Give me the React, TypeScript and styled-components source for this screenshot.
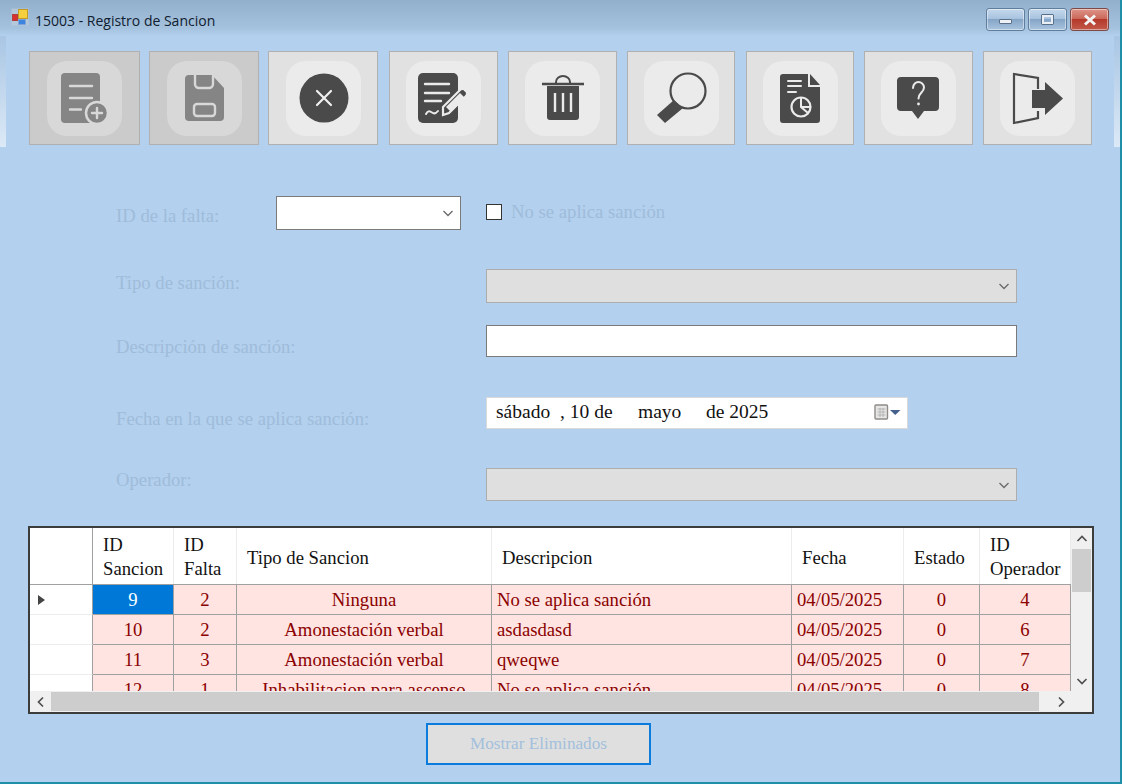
import React from 'react';
import styled, { createGlobalStyle } from 'styled-components';

const GlobalStyle = createGlobalStyle`
  html, body {
    margin: 0;
    padding: 0;
    background: #b3d0ee;
  }
`;

const COLUMNS = '63px 81px 63px 255px 300px 112px 76px 91px';
const SERIF = '"Liberation Serif", "Times New Roman", serif';
const TEXT_SIZE = '18.7px';

const Window = styled.div`
  position: relative;
  width: 1122px;
  height: 784px;
  box-sizing: border-box;
  overflow: hidden;
  border-bottom: 2px solid #1f8fa8;
  border-right: 2px solid #1f8fa8;
  background: linear-gradient(to bottom, #92afcc 0, #a4c1de 28px, #b3d0ee 36px);
  font-family: ${SERIF};

  &::before,
  &::after {
    content: '';
    position: absolute;
    top: 36px;
    width: 6px;
    height: 111px;
    background: linear-gradient(to bottom, #a9c6e4, #dce9f6);
  }

  &::before {
    left: 0;
  }

  &::after {
    right: 0;
  }
`;

const TitleBar = styled.div`
  height: 40px;
  box-sizing: border-box;
  padding: 8px 11px 0 11px;
  display: flex;
  align-items: flex-start;
`;

const TitleText = styled.span`
  margin: 3px 0 0 6px;
  font: 14px/20px "Open Sans", sans-serif;
  color: #10202e;
`;

const CaptionButtons = styled.div`
  margin-left: auto;
  display: flex;
  gap: 3px;
`;

const CaptionButton = styled.div<{ $close?: boolean }>`
  width: 39px;
  height: 23px;
  box-sizing: border-box;
  border: 1px solid ${p => (p.$close ? '#7d4a48' : '#5f7e9e')};
  border-radius: 3px;
  display: flex;
  align-items: center;
  justify-content: center;
  background: ${p =>
    p.$close
      ? 'linear-gradient(to bottom, #dd9488 0, #cc6a5c 45%, #b5392b 50%, #c25a4a 100%)'
      : 'linear-gradient(to bottom, #c5d8ec 0, #a9c4e0 45%, #86a5c6 50%, #a8c4e0 100%)'};
  box-shadow: inset 0 0 0 1px rgba(255, 255, 255, 0.45);
`;

const MinGlyph = styled.div`
  width: 13px;
  height: 5px;
  margin-top: 4px;
  box-sizing: border-box;
  border: 1px solid #5a7088;
  border-radius: 1px;
  background: #eef2f6;
`;

const MaxGlyph = styled.div`
  width: 13px;
  height: 11px;
  box-sizing: border-box;
  border: 3px solid #e8eef4;
  outline: 1px solid #58708a;
  outline-offset: -1px;
  border-radius: 1px;
`;

const Toolbar = styled.div`
  margin-top: 11px;
  padding-left: 29px;
  display: flex;
`;

const ToolButton = styled.div<{ $off?: boolean; $gap: number; $width: number }>`
  width: ${p => p.$width}px;
  height: 94px;
  margin-left: ${p => p.$gap}px;
  box-sizing: border-box;
  border: 1.5px solid #b0b0b0;
  display: flex;
  align-items: center;
  justify-content: center;
  background: ${p => (p.$off ? '#cbcbcb' : '#e1e1e1')};
  color: ${p => (p.$off ? '#858585' : '#4a4a4a')};
  --cut: ${p => (p.$off ? '#d8d8d8' : '#ebebeb')};
`;

const Tile = styled.div`
  width: 75px;
  height: 75px;
  border-radius: 20px;
  background: var(--cut);

  svg {
    display: block;
  }
`;

const Form = styled.div`
  padding-left: 116px;
  display: flex;
  flex-direction: column;
`;

const FieldRow = styled.div<{ $top: number }>`
  margin-top: ${p => p.$top}px;
  display: flex;
  align-items: flex-start;
`;

const FieldLabel = styled.label<{ $width?: number; $offset: number }>`
  width: ${p => p.$width ?? 370}px;
  flex: none;
  padding-top: ${p => p.$offset}px;
  font-size: ${TEXT_SIZE};
  line-height: 20px;
  color: #9fbcda;
`;

const ComboBox = styled.div<{ $width: number; $height: number; $off?: boolean }>`
  width: ${p => p.$width}px;
  height: ${p => p.$height}px;
  box-sizing: border-box;
  padding-right: 6px;
  display: flex;
  align-items: center;
  justify-content: flex-end;
  border: 1px solid ${p => (p.$off ? '#adadad' : '#7a7a7a')};
  background: ${p => (p.$off ? '#dfdfdf' : '#ffffff')};
  color: #6a6a6a;
`;

const TextInput = styled.div`
  width: 531px;
  height: 32px;
  box-sizing: border-box;
  border: 1px solid #7a7a7a;
  background: #ffffff;
`;

const CheckField = styled.div`
  margin-left: 25px;
  padding-top: 6px;
  display: flex;
  align-items: center;
  gap: 9px;
  font-size: ${TEXT_SIZE};
  line-height: 20px;
  color: #9fbcda;
`;

const CheckBox = styled.div`
  width: 16px;
  height: 16px;
  box-sizing: border-box;
  border: 1px solid #333333;
  background: #ffffff;
`;

const DateBox = styled.div`
  width: 422px;
  height: 32px;
  box-sizing: border-box;
  padding: 0 6px 2px 9px;
  display: flex;
  align-items: center;
  border: 1px solid #d9d9d9;
  background: #ffffff;
  font-size: 19.5px;
  color: #111111;
`;

const DatePart = styled.span<{ $width: number }>`
  width: ${p => p.$width}px;
  flex: none;
`;

const CalendarButton = styled.div`
  margin-left: auto;
  display: flex;
  align-items: center;
`;

const DataGrid = styled.div`
  margin: 25px 0 0 28px;
  width: 1066px;
  height: 188px;
  box-sizing: border-box;
  border: 2px solid #3c3c3c;
  display: grid;
  grid-template-columns: 1041px 21px;
  grid-template-rows: 163px 21px;
  background: #ffffff;
`;

const GridBody = styled.div`
  overflow: hidden;
`;

const HeadRow = styled.div`
  height: 57px;
  display: grid;
  grid-template-columns: ${COLUMNS};
  border-bottom: 1px solid #a0a0a0;
  box-sizing: border-box;
`;

const HeadCell = styled.div<{ $first?: boolean; $pull?: boolean }>`
  padding: ${p => (p.$pull ? '2px' : '4px')} 0 0 10px;
  display: flex;
  align-items: center;
  box-sizing: border-box;
  border-right: 1px solid ${p => (p.$first ? '#a0a0a0' : '#ececec')};
  font-size: ${TEXT_SIZE};
  line-height: 24px;
  color: #111111;
`;

const DataRow = styled.div`
  height: 30px;
  display: grid;
  grid-template-columns: ${COLUMNS};
`;

const RowHeader = styled.div`
  padding-left: 8px;
  display: flex;
  align-items: center;
  box-sizing: border-box;
  border-right: 1px solid #a0a0a0;
  border-bottom: 1px solid #ececec;
  background: #ffffff;
`;

const Cell = styled.div<{ $left?: boolean; $selected?: boolean }>`
  box-sizing: border-box;
  padding-left: ${p => (p.$left ? 5 : 0)}px;
  text-align: ${p => (p.$left ? 'left' : 'center')};
  border-right: 1px solid #a0a0a0;
  border-bottom: 1px solid #a0a0a0;
  background: ${p => (p.$selected ? '#0078d7' : '#ffe4e1')};
  color: ${p => (p.$selected ? '#ffffff' : '#8b0000')};
  font-size: ${TEXT_SIZE};
  line-height: 29px;
  white-space: nowrap;
  overflow: hidden;
`;

const VScroll = styled.div`
  display: flex;
  flex-direction: column;
  background: #f0f0f0;
`;

const HScroll = styled.div`
  display: flex;
  background: #f0f0f0;
`;

const ScrollArrow = styled.div`
  width: 21px;
  height: 21px;
  flex: none;
  display: flex;
  align-items: center;
  justify-content: center;
  color: #505050;
`;

const VThumb = styled.div`
  height: 43px;
  margin: 0 1px;
  background: #cdcdcd;
`;

const HThumb = styled.div`
  width: 988px;
  margin: 1px 0;
  background: #cdcdcd;
`;

const Spring = styled.div`
  flex: 1;
`;

const Corner = styled.div`
  background: #f0f0f0;
`;

const Footer = styled.div`
  margin-top: 9px;
  padding-left: 426px;
`;

const PlainButton = styled.div`
  width: 225px;
  height: 42px;
  box-sizing: border-box;
  border: 2px solid #0b7bdc;
  display: flex;
  align-items: center;
  justify-content: center;
  background: #dfdfdf;
  font-size: 17.2px;
  color: #a3bfdc;
`;

function Chevron({ points }: { points: string }) {
  return (
    <svg width="12" height="12" viewBox="0 0 12 12" fill="none" stroke="currentColor" strokeWidth="1.7">
      <polyline points={points} />
    </svg>
  );
}

const Down = () => <Chevron points="1.5,4 6,8.5 10.5,4" />;

const ComboArrow = () => (
  <svg width="12" height="12" viewBox="0 0 12 12" fill="none" stroke="currentColor" strokeWidth="1.3">
    <polyline points="1.5,4 6,8.5 10.5,4" />
  </svg>
);

function AppIcon() {
  return (
    <svg width="18" height="18" viewBox="0 0 18 18">
      <rect x="0.5" y="0.5" width="17" height="17" fill="#c5d0dc" opacity="0.6" />
      <rect x="7.5" y="1.500" width="9" height="9" fill="#f6cf3c" stroke="#c29a28" />
      <rect x="1.500" y="6.500" width="5" height="6" fill="#d8302a" stroke="#b04040" />
      <rect x="7.500" y="11.500" width="7" height="5" fill="#3d84e0" stroke="#7fa5d8" />
    </svg>
  );
}

function CalendarIcon() {
  return (
    <svg width="27" height="18" viewBox="0 0 27 18">
      <rect x="1" y="2" width="12.500" height="14" rx="1" fill="#e6e6e6" stroke="#8f8a88" strokeWidth="1.400" />
      <path d="M3.500 6h8M3.500 9h8M3.500 12h8M6 5v9M9 5v9" stroke="#b4b4b4" strokeWidth="1" />
      <path d="M16 7h10.500l-5.250 5z" fill="#44608c" />
    </svg>
  );
}

const Svg = ({ children }: { children: React.ReactNode }) => (
  <svg width="75" height="75" viewBox="0 0 75 75" fill="currentColor" stroke="none">
    {children}
  </svg>
);

const cut = { stroke: 'var(--cut)', fill: 'none', strokeLinecap: 'round' as const };

function NewIcon() {
  return (
    <Svg>
      <rect x="14" y="12" width="39" height="50" rx="4" />
      <path d="M23 25h22M23 37h22M23 48.5h11" {...cut} strokeWidth="2.4" />
      <circle cx="50" cy="52" r="11" stroke="var(--cut)" strokeWidth="2.5" />
      <path d="M45 52h10M50 47v10" {...cut} strokeWidth="2.4" />
    </Svg>
  );
}

function SaveIcon() {
  return (
    <Svg>
      <path d="M22 14h23l12 13v29a4 4 0 0 1-4 4H22a4 4 0 0 1-4-4V18a4 4 0 0 1 4-4z" />
      <path d="M28 13v10a4 4 0 0 0 4 4h10a4 4 0 0 0 4-4V13" {...cut} strokeWidth="2.4" />
      <rect x="27" y="43" width="21" height="12" rx="3" {...cut} strokeWidth="2.4" />
    </Svg>
  );
}

function CancelIcon() {
  return (
    <Svg>
      <circle cx="38" cy="37" r="24.5" />
      <path d="M31 30l14 14M45 30l-14 14" stroke="#f0f0f0" strokeWidth="2.2" strokeLinecap="round" />
    </Svg>
  );
}

function EditIcon() {
  return (
    <Svg>
      <rect x="12" y="12" width="40" height="50" rx="5" />
      <path d="M19 23h24M19 32h24M19 40h16" {...cut} strokeWidth="2.4" />
      <path d="M20 53c2-4 4-3 6-1.500s4 1 6-1.500" {...cut} strokeWidth="2" />
      <path d="M37 46l17-17a3 3 0 0 1 4.500 0l1.500 1.500a3 3 0 0 1 0 4.500L43 52l-6 2z" stroke="var(--cut)" strokeWidth="2.2" />
      <path d="M40 46l14-14 5 5-14 14z" fill="var(--cut)" />
      <path d="M55 31l2-2 3 3-2 2z" />
    </Svg>
  );
}

function TrashIcon() {
  return (
    <Svg>
      <path d="M17 23h42" stroke="currentColor" strokeWidth="2.4" />
      <path d="M31 23v-2a7 6 0 0 1 14 0v2" fill="none" stroke="currentColor" strokeWidth="2" />
      <path d="M22 25h32v31a3 3 0 0 1-3 3H25a3 3 0 0 1-3-3z" />
      <path d="M30 32v19M38 32v19M46 32v19" stroke="var(--cut)" strokeWidth="2.4" />
    </Svg>
  );
}

function SearchIcon() {
  return (
    <Svg>
      <circle cx="44" cy="30" r="17.500" fill="none" stroke="currentColor" strokeWidth="2.2" />
      <path d="M13 54l17-15 9 8-18 15z" />
    </Svg>
  );
}

function ReportIcon() {
  return (
    <Svg>
      <path d="M20 13h25v13h12v33a3 3 0 0 1-3 3H20a3 3 0 0 1-3-3V16a3 3 0 0 1 3-3z" />
      <path d="M47 13l10 11H47z" />
      <path d="M25 20h13M25 25h13M25 31h8" {...cut} strokeWidth="2" />
      <circle cx="38" cy="46" r="9.500" {...cut} strokeWidth="2.2" />
      <path d="M38 37v9l7 6M38 46h9" {...cut} strokeWidth="2" />
    </Svg>
  );
}

function HelpIcon() {
  return (
    <Svg>
      <path d="M20 16h34a4 4 0 0 1 4 4v26a4 4 0 0 1-4 4H43l-6 8-6-8H20a4 4 0 0 1-4-4V20a4 4 0 0 1 4-4z" />
      <path d="M32 27c0-4 3-6 5.500-6s5.500 2 5.500 5.500c0 5-5.500 5-5.500 11" {...cut} strokeWidth="2" />
      <circle cx="37.500" cy="43" r="1.400" fill="var(--cut)" />
    </Svg>
  );
}

function ExitIcon() {
  return (
    <Svg>
      <path d="M38 28V17l-24-4v49l24-5V50" fill="none" stroke="currentColor" strokeWidth="2.2" />
      <path d="M32 29h13v-8l18 16.500L45 54v-7H32z" />
    </Svg>
  );
}

const tools = [
  { Icon: NewIcon, off: true, gap: 0, width: 111 },
  { Icon: SaveIcon, off: true, gap: 9, width: 110 },
  { Icon: CancelIcon, off: false, gap: 9, width: 110 },
  { Icon: EditIcon, off: false, gap: 11, width: 109 },
  { Icon: TrashIcon, off: false, gap: 10, width: 109 },
  { Icon: SearchIcon, off: false, gap: 10, width: 108 },
  { Icon: ReportIcon, off: false, gap: 11, width: 108 },
  { Icon: HelpIcon, off: false, gap: 10, width: 109 },
  { Icon: ExitIcon, off: false, gap: 10, width: 109 },
];

const headers: { text: React.ReactNode; pull?: boolean }[] = [
  { text: '' },
  { text: <>ID<br />Sancion</>, pull: true },
  { text: <>ID<br />Falta</>, pull: true },
  { text: 'Tipo de Sancion' },
  { text: 'Descripcion' },
  { text: 'Fecha' },
  { text: 'Estado' },
  { text: <>ID<br />Operador</>, pull: true },
];

const rows = [
  ['9', '2', 'Ninguna', 'No se aplica sanción', '04/05/2025', '0', '4'],
  ['10', '2', 'Amonestación verbal', 'asdasdasd', '04/05/2025', '0', '6'],
  ['11', '3', 'Amonestación verbal', 'qweqwe', '04/05/2025', '0', '7'],
  ['12', '1', 'Inhabilitacion para ascenso', 'No se aplica sanción', '04/05/2025', '0', '8'],
];

function App() {
  return (
    <Window>
      <GlobalStyle />
      <TitleBar>
        <AppIcon />
        <TitleText>15003 - Registro de Sancion</TitleText>
        <CaptionButtons>
          <CaptionButton><MinGlyph /></CaptionButton>
          <CaptionButton><MaxGlyph /></CaptionButton>
          <CaptionButton $close>
            <svg width="16" height="12" viewBox="0 0 16 12">
              <path d="M3 1.500l10 9M13 1.500l-10 9" stroke="#f4f4f4" strokeWidth="3" />
            </svg>
          </CaptionButton>
        </CaptionButtons>
      </TitleBar>

      <Toolbar>
        {tools.map(({ Icon, off, gap, width }, i) => (
          <ToolButton key={i} $off={off} $gap={gap} $width={width}>
            <Tile><Icon /></Tile>
          </ToolButton>
        ))}
      </Toolbar>

      <Form>
        <FieldRow $top={51}>
          <FieldLabel $width={160} $offset={10}>ID de la falta:</FieldLabel>
          <ComboBox $width={185} $height={34}><ComboArrow /></ComboBox>
          <CheckField>
            <CheckBox />
            No se aplica sanción
          </CheckField>
        </FieldRow>
        <FieldRow $top={39}>
          <FieldLabel $offset={4}>Tipo de sanción:</FieldLabel>
          <ComboBox $width={531} $height={34} $off><ComboArrow /></ComboBox>
        </FieldRow>
        <FieldRow $top={22}>
          <FieldLabel $offset={12}>Descripción de sanción:</FieldLabel>
          <TextInput />
        </FieldRow>
        <FieldRow $top={40}>
          <FieldLabel $offset={12}>Fecha en la que se aplica sanción:</FieldLabel>
          <DateBox>
            <DatePart $width={64}>sábado</DatePart>
            <DatePart $width={78}>, 10 de</DatePart>
            <DatePart $width={68}>mayo</DatePart>
            <DatePart $width={80}>de 2025</DatePart>
            <CalendarButton><CalendarIcon /></CalendarButton>
          </DateBox>
        </FieldRow>
        <FieldRow $top={39}>
          <FieldLabel $offset={2}>Operador:</FieldLabel>
          <ComboBox $width={531} $height={33} $off><ComboArrow /></ComboBox>
        </FieldRow>
      </Form>

      <DataGrid>
        <GridBody>
          <HeadRow>
            {headers.map((h, i) => (
              <HeadCell key={i} $first={i === 0} $pull={h.pull}>{h.text ? <div>{h.text}</div> : null}</HeadCell>
            ))}
          </HeadRow>
          {rows.map((row, r) => (
            <DataRow key={row[0]}>
              <RowHeader>
                {r === 0 && (
                  <svg width="8" height="12" viewBox="0 0 8 12">
                    <path d="M0 1l7 5-7 5z" fill="#444444" />
                  </svg>
                )}
              </RowHeader>
              {row.map((value, c) => (
                <Cell key={c} $left={c === 3 || c === 4} $selected={r === 0 && c === 0}>{value}</Cell>
              ))}
            </DataRow>
          ))}
        </GridBody>
        <VScroll>
          <ScrollArrow><Chevron points="1.500,8 6,3.500 10.500,8" /></ScrollArrow>
          <VThumb />
          <Spring />
          <ScrollArrow><Down /></ScrollArrow>
        </VScroll>
        <HScroll>
          <ScrollArrow><Chevron points="8,1.500 3.500,6 8,10.500" /></ScrollArrow>
          <HThumb />
          <Spring />
          <ScrollArrow><Chevron points="4,1.500 8.500,6 4,10.500" /></ScrollArrow>
        </HScroll>
        <Corner />
      </DataGrid>

      <Footer>
        <PlainButton>Mostrar Eliminados</PlainButton>
      </Footer>
    </Window>
  );
}

export default App;
